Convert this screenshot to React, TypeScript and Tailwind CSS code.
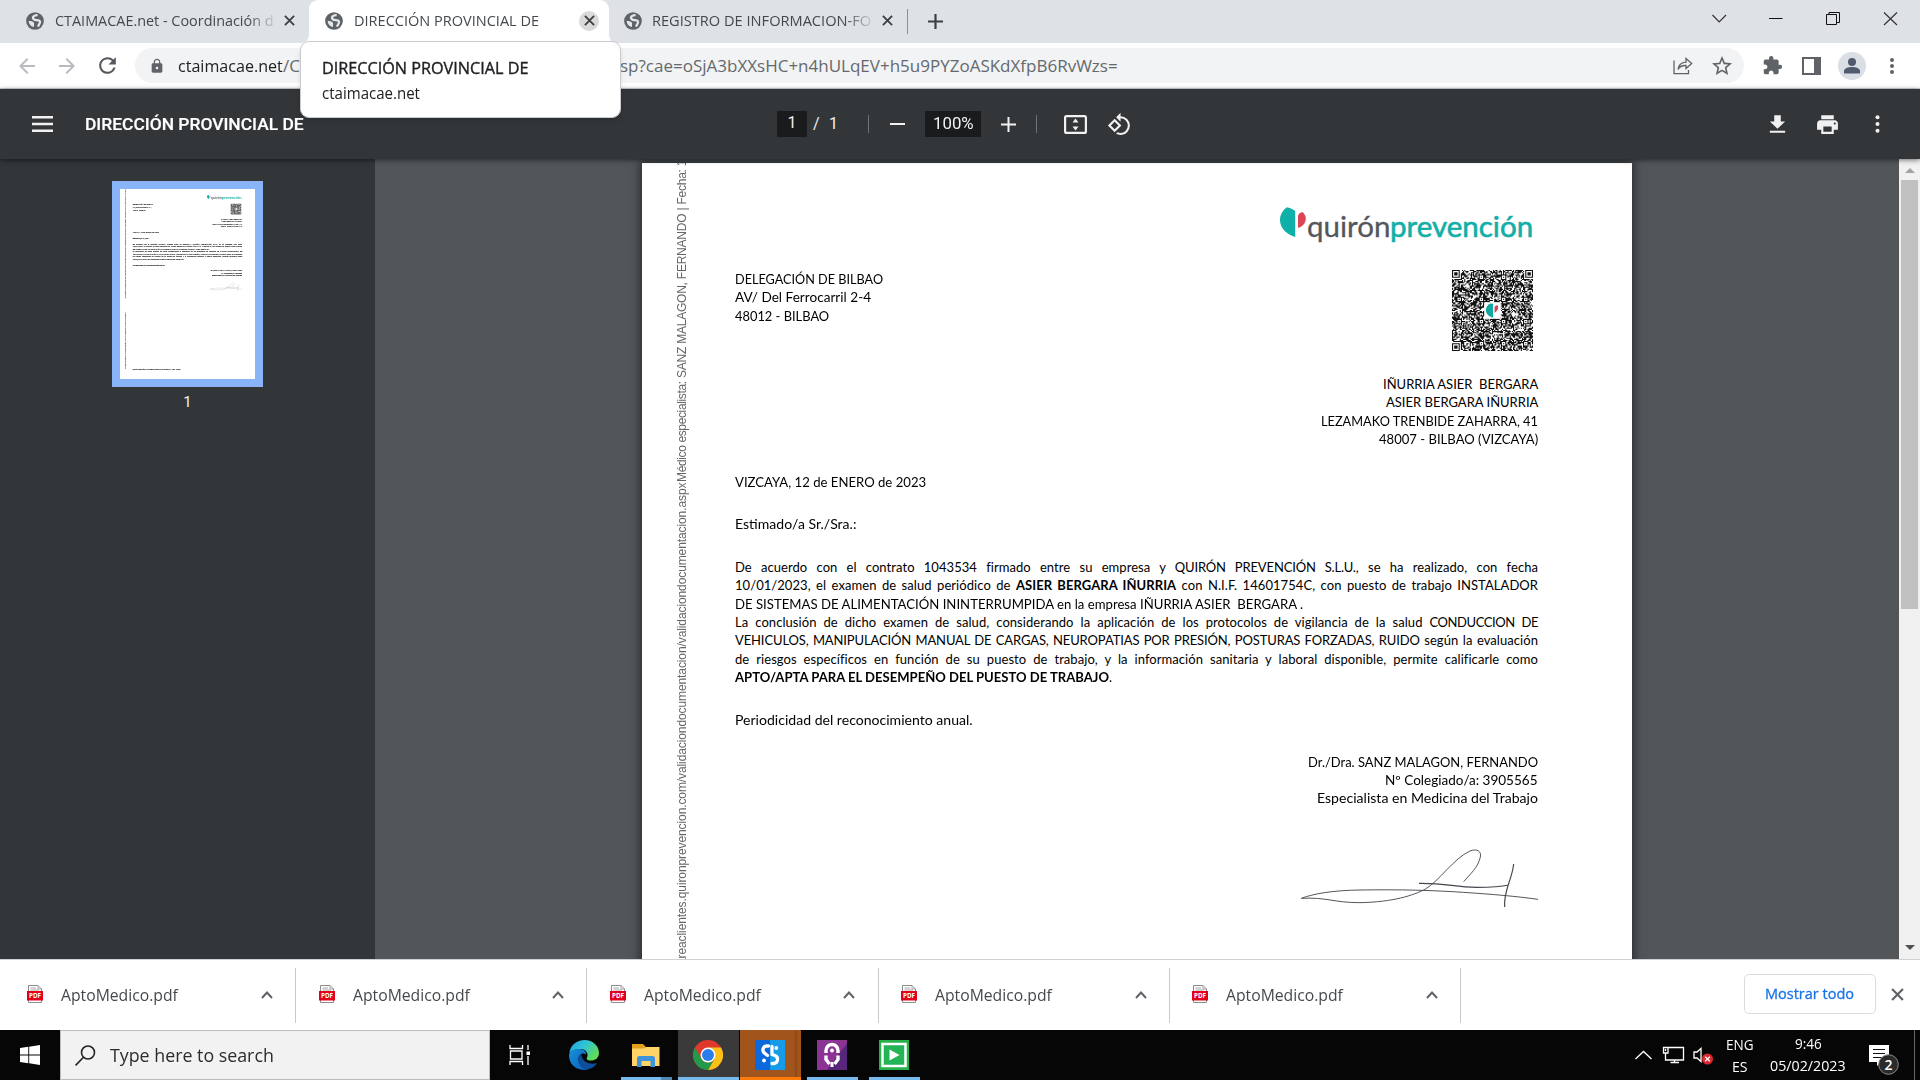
import { useLayoutEffect, useRef, useState } from "react";
import type { ReactNode } from "react";
import { MdStarOutline, MdExtension, MdLock, MdRefresh, MdPrint, MdFileDownload, MdArrowBack, MdArrowForward } from "react-icons/md";

/** Text stretched or condensed horizontally to the width of its box. */
function Fit({ children, className = "" }: { children: ReactNode; className?: string }) {
  const box = useRef<HTMLSpanElement>(null);
  const inner = useRef<HTMLSpanElement>(null);
  const [scale, setScale] = useState(1);
  useLayoutEffect(() => {
    if (box.current && inner.current && inner.current.offsetWidth > 0) {
      setScale(box.current.clientWidth / inner.current.offsetWidth);
    }
  }, []);
  return (
    <span ref={box} className={"block shrink-0 whitespace-pre " + className}>
      <span ref={inner} className="inline-block origin-left" style={{ transform: `scaleX(${scale})` }}>
        {children}
      </span>
    </span>
  );
}

function Globe() {
  return (
    <svg viewBox="0 0 24 24" className="h-[18px] w-[18px] shrink-0">
      <circle cx="12" cy="12" r="11.8" fill="#5f6368" />
      <path d="M15.5 4.2C10 4 7.800 7.500 10.500 9.800C12.500 11.600 17.500 9.800 18.700 12.500C19.500 15 16.800 16.500 16 19.500" fill="none" stroke="#e4e7ea" strokeWidth="3" />
      <path d="M3.500 11.500C6.500 12 11.500 12.500 10.800 16L10.600 20C6 19 3.500 15.500 3.500 11.500Z" fill="#e4e7ea" />
    </svg>
  );
}

function Cross({ className }: { className: string }) {
  return (
    <svg viewBox="0 0 12 12" className={"shrink-0 " + className}>
      <path d="M1 1L11 11M11 1L1 11" stroke="currentColor" strokeWidth="2" fill="none" />
    </svg>
  );
}

function TabStrip() {
  return (
    <div className="flex h-[43px] shrink-0 bg-[#dee1e6] text-[15px] leading-[20px] text-[#45494d]">
      <div className="flex h-[41px] w-[309px] shrink-0 items-center pl-[26px]">
        <Globe />
        <div className="mb-px ml-[11px] w-[219px] overflow-hidden [mask-image:linear-gradient(to_right,black_88%,transparent_102%)]">
          <Fit className="w-[219px]">CTAIMACAE.net - Coordinación d</Fit>
        </div>
        <Cross className="ml-[10px] h-[11px] w-[11px] text-[#3c4043]" />
      </div>
      <div className="relative flex h-[43px] w-[300px] shrink-0 items-center rounded-t-[9px] bg-white pb-[2px] pl-[16px]">
        <svg viewBox="0 0 9 9" className="absolute -left-[9px] bottom-0 h-[9px] w-[9px]"><path d="M9 0V9H0Q9 9 9 0Z" fill="#fff" /></svg>
        <svg viewBox="0 0 9 9" className="absolute -right-[9px] bottom-0 h-[9px] w-[9px]"><path d="M0 0V9H9Q0 9 0 0Z" fill="#fff" /></svg>
        <Globe />
        <Fit className="mb-px ml-[11px] w-[185px]">DIRECCIÓN PROVINCIAL DE</Fit>
        <div className="ml-[40px] flex h-[20px] w-[20px] items-center justify-center rounded-full bg-[#dadada]">
          <Cross className="h-[11px] w-[11px] text-[#3c4043]" />
        </div>
      </div>
      <div className="flex h-[41px] w-[298px] shrink-0 items-center pl-[15px]">
        <Globe />
        <div className="mb-px ml-[10px] w-[219px] overflow-hidden [mask-image:linear-gradient(to_right,black_88%,transparent_102%)]">
          <Fit className="w-[219px]">REGISTRO DE INFORMACION-FO</Fit>
        </div>
        <Cross className="ml-[11px] h-[11px] w-[11px] text-[#3c4043]" />
      </div>
      <div className="mt-[9px] h-[25px] w-px bg-[#8b8e92]" />
      <svg viewBox="0 0 15 15" className="ml-[20px] mt-[14px] h-[15px] w-[15px]"><path d="M7.500 0V15M0 7.500H15" stroke="#3c4043" strokeWidth="2.200" /></svg>
      <svg viewBox="0 0 186 14" className="ml-auto mr-[22px] mt-[12px] h-[14px] w-[186px]" fill="none" stroke="#111">
        <path d="M.5 3L7.200 9.800L14 3" stroke="#333" strokeWidth="1.200" />
        <path d="M57 6.500H70.500" />
        <path d="M114.500 2.500H124.500V12.500H114.500ZM117 2.500V.5H127.500V10.500H125" />
        <path d="M172 .5L185 13M185 .5L172 13" stroke="#333" strokeWidth="1.200" />
      </svg>
    </div>
  );
}

function AddressBar() {
  return (
    <div className="flex h-[46px] shrink-0 items-center border-b border-[#d5d7da] bg-white">
      <MdArrowBack className="ml-[15px] h-[24px] w-[24px] text-[#b9bbbe]" />
      <MdArrowForward className="ml-[16px] h-[24px] w-[24px] text-[#b9bbbe]" />
      <MdRefresh className="ml-[16px] h-[25px] w-[25px] text-[#55595d]" />
      <div className="ml-[15px] flex h-[35px] w-[1609px] shrink-0 items-center rounded-full bg-[#f1f3f4] pl-[14px]">
        <MdLock className="h-[16px] w-[16px] text-[#5f6368]" />
        <div className="ml-[13px] flex text-[17px] leading-[22px] text-[#65696d]">
          <Fit className="w-[105px] text-[#202124]">ctaimacae.net</Fit>
          <span className="w-[337px]">/C</span>
          <Fit className="w-[498px]">sp?cae=oSjA3bXXsHC+n4hULqEV+h5u9PYZoASKdXfpB6RvWzs=</Fit>
        </div>
        <svg viewBox="0 0 20 18" className="ml-auto h-[18px] w-[20px] shrink-0" fill="none" stroke="#5f6368" strokeWidth="1.300">
          <path d="M1 3.500V16.700H15.500V13M5 12.500C5.500 8 8 5.500 13 5.200V1.500L18.700 6.500L13 11.500V8.500C9 8.300 6.500 9.500 5 12.500Z" />
        </svg>
        <MdStarOutline className="ml-[17px] mr-[10px] h-[24px] w-[24px] text-[#5f6368]" />
      </div>
      <MdExtension className="ml-[18px] h-[21px] w-[21px] text-[#5f6368]" />
      <svg viewBox="0 0 19 18" className="ml-[19px] h-[18px] w-[19px]"><path d="M1 1H18V17H1Z" fill="none" stroke="#5f6368" strokeWidth="2" /><path d="M12 1H18V17H12Z" fill="#5f6368" /></svg>
      <svg viewBox="0 0 28 28" className="ml-[17px] h-[28px] w-[28px]">
        <circle cx="14" cy="14" r="14" fill="#dadfe6" />
        <circle cx="14" cy="10" r="4" fill="#505b70" />
        <path d="M6 21.500V19C6 16.500 10 15 14 15S22 16.500 22 19V21.500Z" fill="#505b70" />
      </svg>
      <svg viewBox="0 0 4 18" className="ml-[24px] h-[18px] w-[4px]" fill="#5f6368"><circle cx="2" cy="3" r="2" /><circle cx="2" cy="9" r="2" /><circle cx="2" cy="15" r="2" /></svg>
    </div>
  );
}

function HoverCard() {
  return (
    <div className="absolute left-[300px] top-[41px] z-20 h-[77px] w-[321px] rounded-[9px] border border-[#c9cbce] bg-white pl-[21px] pt-[14px] text-[15.500px] leading-[25px] text-[#202124] shadow-md">
      <Fit className="w-[206px] [-webkit-text-stroke:.35px_#202124]">DIRECCIÓN PROVINCIAL DE</Fit>
      <Fit className="w-[98px]">ctaimacae.net</Fit>
    </div>
  );
}

function PdfToolbar() {
  return (
    <div className="relative z-10 flex h-[70px] shrink-0 items-center bg-[#323639] font-['Roboto'] text-[16px] leading-[20px] text-[#f1f1f1] shadow-[0_1px_5px_rgba(0,0,0,.55)]">
      <svg viewBox="0 0 21 16" className="ml-[32px] h-[16px] w-[21px]" fill="#f1f1f1"><path d="M0 0H21V2.500H0ZM0 6.700H21V9.200H0ZM0 13.500H21V16H0Z" /></svg>
      <Fit className="ml-[32px] w-[219px] text-[17px] font-medium text-white [-webkit-text-stroke:.2px_#fff]">DIRECCIÓN PROVINCIAL DE</Fit>
      <div className="ml-[473px] h-[26px] w-[30px] bg-[#191b1c] pt-[2px] text-center">1</div>
      <div className="ml-[6px] w-[6px]">/</div>
      <div className="ml-[10px] w-[10px]">1</div>
      <div className="ml-[29px] h-[18px] w-px bg-[#717476]" />
      <div className="ml-[21px] h-[2px] w-[15px] bg-[#f1f1f1]" />
      <div className="ml-[20px] flex h-[26px] w-[56px] items-center justify-center bg-[#191b1c]"><Fit className="w-[41px]">100%</Fit></div>
      <svg viewBox="0 0 15 15" className="ml-[20px] h-[15px] w-[15px]"><path d="M7.500 0V15M0 7.500H15" stroke="#f1f1f1" strokeWidth="2" /></svg>
      <div className="ml-[20px] h-[18px] w-px bg-[#717476]" />
      <svg viewBox="0 0 23 19" className="ml-[27px] h-[19px] w-[23px]">
        <rect x="1.100" y="1.100" width="20.800" height="16.800" rx="1.500" fill="none" stroke="#f1f1f1" strokeWidth="2.200" />
        <path d="M11.500 3.500L14.500 7.500H8.500ZM11.500 15.500L14.500 11.500H8.500Z" fill="#f1f1f1" />
      </svg>
      <svg viewBox="0 0 24 24" className="ml-[20px] h-[25px] w-[25px]">
        <path fill="#f1f1f1" d="M7.340 6.410L.860 12.900l6.490 6.480 6.490-6.480-6.500-6.490zM3.690 12.900l3.660-3.660L11 12.900l-3.660 3.660-3.650-3.660zm15.670-6.260A8.950 8.950 0 0 0 13 4V.760L8.760 5 13 9.240V6c1.790 0 3.580.680 4.950 2.050a7.007 7.007 0 0 1 0 9.900 6.973 6.973 0 0 1-7.790 1.440l-1.490 1.490C10.020 21.620 11.510 22 13 22c2.300 0 4.610-.880 6.360-2.640a8.980 8.980 0 0 0 0-12.720z" />
      </svg>
      <MdFileDownload className="ml-auto h-[25px] w-[25px] scale-x-105" />
      <MdPrint className="ml-[25px] h-[25px] w-[25px]" />
      <svg viewBox="0 0 4 18" className="ml-[35px] mr-[40px] h-[18px] w-[5px]" fill="#f1f1f1"><circle cx="2" cy="2.300" r="2" /><circle cx="2" cy="9" r="2" /><circle cx="2" cy="15.700" r="2" /></svg>
    </div>
  );
}

const QR_SIZE = 73;

/** Module pattern of the QR code: three finders, a grid of alignment marks and a pseudo-random payload. */
function qrPath(): string {
  const centres = [6, 26, 46, 66];
  let seed = 20230112;
  let d = "";
  const ring = (dx: number, dy: number) => Math.max(Math.abs(dx), Math.abs(dy));
  for (let y = 0; y < QR_SIZE; y++) {
    for (let x = 0; x < QR_SIZE; x++) {
      seed = (seed * 1103515245 + 12345) % 2147483648;
      let on = (seed >> 16) % 100 < 58;
      const fx = x < 8 ? 3 : x > QR_SIZE - 9 ? QR_SIZE - 4 : -1;
      const fy = y < 8 ? 3 : y > QR_SIZE - 9 ? QR_SIZE - 4 : -1;
      if (fx >= 0 && fy >= 0 && !(fx > 3 && fy > 3)) {
        const r = ring(x - fx, y - fy);
        on = r === 3 || r <= 1;
      } else {
        for (const cy of centres) for (const cx of centres) {
          const r = ring(x - cx, y - cy);
          if (r <= 2) on = r !== 1;
        }
      }
      if (on) d += `M${x} ${y}h1v1h-1z`;
    }
  }
  return d;
}
const QR_PATH = qrPath();

function QrCode() {
  return (
    <svg viewBox="0 0 73 73" className="h-[81px] w-[81px]">
      <path d={QR_PATH} fill="#111" />
      <rect x="29" y="29" width="15" height="15" fill="#fff" />
      <path d="M37 30.500V43C33 42 30.500 39 30.500 36C30.500 33.500 32.500 31 34.500 30.200Z" fill="#12a8a0" />
      <path d="M38.300 38.500V34C38.300 32.500 40 31.500 41 31.800C42.500 34 41 37 38.300 38.500Z" fill="#d9445b" />
    </svg>
  );
}

function Logo() {
  return (
    <div className="flex h-[38px] w-[253px] text-[29.500px] leading-[38px]">
      <svg viewBox="0 0 27 31" className="h-[31px] w-[27px]">
        <path d="M15.200 4V30C8 28 0 22 0 13C0 7 3.500 2.500 7 .3C11 1.200 13.500 3 15.200 4Z" fill="#0fb0a7" />
        <path d="M18 21V9C18.500 6.500 21 4.800 23 5.200C25.500 8 26.500 11 25.500 14C24.500 17.500 21.500 20 18 21Z" fill="#dc4558" />
      </svg>
      <Fit className="h-[38px] w-[83px] text-[#54565b] [-webkit-text-stroke:.3px_#54565b]">quirón</Fit>
      <Fit className="h-[38px] w-[143px] text-[#13afa7] [-webkit-text-stroke:.6px_#13afa7]">prevención</Fit>
    </div>
  );
}

function Justified({ children }: { children: ReactNode }) {
  return <div className="w-[803px] whitespace-nowrap tracking-[.06px] [text-align-last:justify]">{children}</div>;
}

function Letter() {
  return (
    <div className="relative flex h-[1394px] w-[990px] flex-col overflow-hidden bg-white pl-[93px] pr-[94px] pt-[44px] font-['Lato'] text-[13px] leading-[18.330px] text-black">
      <div className="absolute left-[33px] top-0 flex h-[1320px] rotate-180 whitespace-pre font-['Liberation_Sans'] text-[12px] leading-[14px] text-[#666] [writing-mode:vertical-rl]">
        <span className="h-[518px] shrink-0">Documento firmado electrónicamente. Puede comprobar su validez en https://</span>
        <span className="h-[483px] shrink-0 tracking-[-.1px]">areaclientes.quironprevencion.com/validaciondocumentacion/validaciondocumentacion.aspx</span>
        <span className="h-[104px] shrink-0 tracking-[-.37px]">Médico especialista: </span>
        <span className="shrink-0 tracking-[-.23px]">SANZ MALAGON, FERNANDO | Fecha: 1</span>
      </div>
      <div className="mr-[5px] self-end"><Logo /></div>
      <div className="mt-[25px] flex h-[81px] justify-between pr-[5px]">
        <div>
          <Fit className="w-[148px]">DELEGACIÓN DE BILBAO</Fit>
          <Fit className="w-[136px]">AV/ Del Ferrocarril 2-4</Fit>
          <Fit className="w-[94px]">48012 - BILBAO</Fit>
        </div>
        <QrCode />
      </div>
      <div className="mt-[24px] flex flex-col items-end">
        <Fit className="w-[155px]">{"IÑURRIA ASIER  BERGARA"}</Fit>
        <Fit className="w-[152px]">ASIER BERGARA IÑURRIA</Fit>
        <Fit className="w-[217px]">LEZAMAKO TRENBIDE ZAHARRA, 41</Fit>
        <Fit className="w-[159px]">48007 - BILBAO (VIZCAYA)</Fit>
      </div>
      <Fit className="mt-[25px] w-[191px]">VIZCAYA, 12 de ENERO de 2023</Fit>
      <Fit className="mt-[23px] w-[121px]">Estimado/a Sr./Sra.:</Fit>
      <div className="mt-[25px]">
        <Justified>De acuerdo con el contrato 1043534 firmado entre su empresa y <span className="tracking-[-.15px]">QUIRÓN PREVENCIÓN S.L.U.</span>, se ha realizado, con fecha</Justified>
        <Justified>10/01/2023, el examen de salud periódico de <b>ASIER BERGARA IÑURRIA</b> con N.I.F. 14601754C, con puesto de trabajo INSTALADOR</Justified>
        <Fit className="w-[568px]">{"DE SISTEMAS DE ALIMENTACIÓN ININTERRUMPIDA en la empresa IÑURRIA ASIER  BERGARA ."}</Fit>
        <Justified>La conclusión de dicho examen de salud, considerando la aplicación de los protocolos de vigilancia de la salud <span className="tracking-[-.4px]">CONDUCCION DE</span></Justified>
        <Justified><span className="tracking-[-.12px]">VEHICULOS, MANIPULACIÓN MANUAL DE CARGAS, NEUROPATIAS POR PRESIÓN, POSTURAS FORZADAS, RUIDO</span> según la evaluación</Justified>
        <Justified>de riesgos específicos en función de su puesto de trabajo, y la información sanitaria y laboral disponible, permite calificarle como</Justified>
        <Fit className="w-[377px]"><b>APTO/APTA PARA EL DESEMPEÑO DEL PUESTO DE TRABAJO</b>.</Fit>
      </div>
      <Fit className="mt-[25px] w-[238px]">Periodicidad del reconocimiento anual.</Fit>
      <div className="mt-[23px] flex flex-col items-end">
        <Fit className="w-[230px]">Dr./Dra. SANZ MALAGON, FERNANDO</Fit>
        <Fit className="w-[153px]">Nº Colegiado/a: 3905565</Fit>
        <Fit className="w-[221px]">Especialista en Medicina del Trabajo</Fit>
      </div>
      <svg viewBox="600 920 720 192" className="mr-[-2px] mt-[39px] h-[64px] w-[240px] shrink-0 self-end" fill="none" stroke="#55555c" strokeWidth="3">
        <path d="M604 1074C640 1060 700 1050 780 1049C900 1047 1000 1050 1090 1056C1180 1062 1250 1068 1314 1077M604 1074C680 1070 700 1087 780 1087C880 1085 940 1065 975 1047C1020 1020 1060 955 1110 932C1130 924 1145 932 1141 950C1135 980 1110 1002 1091 1024" />
        <path d="M957 1029C1040 1028 1060 1040 1130 1041C1170 1041 1200 1040 1226 1034M1241 971C1236 1020 1210 1050 1214 1100" stroke="#44444c" strokeWidth="3.500" />
      </svg>
      <div className="mt-auto pb-[62px] text-[10px] leading-[16px]"><Fit className="w-[350px]">QUIRÓN PREVENCIÓN S.L.U. Delegación de Bilbao, Av. Del Ferrocarril 2-4, 48012 - BILBAO</Fit></div>
    </div>
  );
}

function PdfViewer() {
  return (
    <div className="flex min-h-0 flex-1 bg-[#525659]">
      <div className="flex w-[375px] shrink-0 flex-col items-center bg-[#323639] pt-[22px]">
        <div className="h-[206px] w-[151px] border-8 border-[#8ab4f8]">
          <div className="h-[190px] w-[135px] overflow-hidden bg-white">
            <div className="w-[990px] origin-top-left scale-[.13636] [-webkit-text-stroke:.5px]"><Letter /></div>
          </div>
        </div>
        <span className="mt-[5px] font-['Roboto'] text-[15px] leading-[20px] text-[#f1f1f1]">1</span>
      </div>
      <div className="min-w-0 flex-1 overflow-hidden pl-[267px] pt-[4px]">
        <div className="h-[1394px] w-[990px] shadow-[0_0_9px_2px_rgba(0,0,0,.5)]"><Letter /></div>
      </div>
      <div className="flex w-[21px] shrink-0 flex-col items-center bg-[#f1f1f1] pb-[9px] pt-[9px]">
        <svg viewBox="0 0 10 5" className="h-[5px] w-[10px] shrink-0"><path d="M0 5L5 0L10 5Z" fill="#a3a3a3" /></svg>
        <div className="mt-[7px] h-[429px] w-[17px] bg-[#c1c1c1]" />
        <svg viewBox="0 0 10 5" className="mt-auto h-[5px] w-[10px] shrink-0"><path d="M0 0L5 5L10 0Z" fill="#505050" /></svg>
      </div>
    </div>
  );
}

function PdfFileIcon() {
  return (
    <svg viewBox="0 0 16 18" className="h-[18px] w-[16px] shrink-0">
      <path d="M1.500 .5H11L14.500 4V17.500H1.500Z" fill="#fff" stroke="#8c8c8c" />
      <path d="M11 .5V4H14.500M3.500 3H9M3.500 5H12" fill="none" stroke="#a5a5a5" />
      <rect y="6" width="16" height="9.500" fill="#e2001a" />
      <text x="8" y="13.300" textAnchor="middle" fontSize="7" fontWeight="700" textLength="12" lengthAdjust="spacingAndGlyphs" fill="#fff">PDF</text>
    </svg>
  );
}

function DownloadShelf() {
  return (
    <div className="flex h-[71px] shrink-0 items-start border-t border-[#cfd1d3] bg-white pt-[8px]">
      {["a", "b", "c", "d", "e"].map((id) => (
        <div key={id} className="flex h-[55px] w-[291.250px] shrink-0 items-center border-r border-[#c8c9cb] pl-[22.500px] text-[16px] leading-[22px] text-[#45494d] first:w-[296px] first:pl-[27px]">
          <div className="pb-[3px]"><PdfFileIcon /></div>
          <Fit className="mb-px ml-[18px] w-[117px]">AptoMedico.pdf</Fit>
          <svg viewBox="0 0 12 8" className="mb-px ml-[82.500px] h-[8px] w-[12px]"><path d="M1 7L6 1.500L11 7" fill="none" stroke="#5f6368" strokeWidth="2" /></svg>
        </div>
      ))}
      <div className="ml-auto mt-[6px] flex h-[40px] w-[132px] items-center justify-center rounded-[5px] border border-[#dadce0] pb-[2px] pr-[2px] text-[15px] leading-[20px] text-[#1a73e8] [-webkit-text-stroke:.3px_#1a73e8]">
        <Fit className="w-[89px]">Mostrar todo</Fit>
      </div>
      <Cross className="ml-[15px] mr-[16px] mt-[20px] h-[13px] w-[13px] text-[#5f6368]" />
    </div>
  );
}

function EdgeIcon() {
  return (
    <svg viewBox="0 0 30 30" className="h-[30px] w-[30px]">
      <defs>
        <linearGradient id="edgeTop" x1="0" y1="0" x2="1" y2=".6"><stop offset="0" stopColor="#1f9fe0" /><stop offset=".5" stopColor="#30c4d4" /><stop offset="1" stopColor="#63dd52" /></linearGradient>
        <linearGradient id="edgeLow" x1="0" y1="0" x2="1" y2="1"><stop offset="0" stopColor="#1694dd" /><stop offset="1" stopColor="#0a5cb4" /></linearGradient>
      </defs>
      <path d="M.3 13C1.500 5 8 0 15.500 0C24 0 30 6 30 13C30 18 26 20.500 22 20.500C18 20.500 17 19 18 17.500C20 14 17 9 11.500 9C6 9 2 11 .3 13Z" fill="url(#edgeTop)" />
      <path d="M.2 14C1.500 10.500 6 8.800 10.500 9C15 9.200 17.500 12 17 14.500C13 12 9 15 9.500 20C10 25 14 29 19 29.400C8 32 -1 24.500 .2 14Z" fill="url(#edgeLow)" />
      <path d="M12 13.700C7 17 9 27.500 18 29.600C22 29 26 26.500 28 23C22.500 25 13 23 12 13.700Z" fill="#0d4f9c" />
    </svg>
  );
}

function FolderIcon() {
  return (
    <svg viewBox="0 0 28 23" className="h-[23px] w-[28px]">
      <path d="M0 0H11L14 3H27V8H0Z" fill="#e0a01c" />
      <path d="M0 4.500H12L14.500 3H27.500V22H0Z" fill="#ffd367" />
      <path d="M5 23V14.500Q5 12 7.500 12H20.500Q23 12 23 14.500V23H18.500V17H9.500V23Z" fill="#3f93d8" />
    </svg>
  );
}

function ChromeIcon() {
  return (
    <svg viewBox="0 0 30 30" className="h-[30px] w-[30px]">
      <circle cx="15" cy="15" r="15" fill="#e0382c" />
      <path d="M15 7.500H28A15 15 0 0 1 15 30L21.500 18.700Z" fill="#fbc116" />
      <path d="M2 7.500L8.500 18.700Q11 22.500 15 22.500Q19 22.500 21.500 18.700L15 30A15 15 0 0 1 2 7.500Z" fill="#229a4a" />
      <circle cx="15" cy="15" r="7.500" fill="#fff" />
      <circle cx="15" cy="15" r="6" fill="#2b7de9" />
    </svg>
  );
}

function TaskbarApp({ children, box, line }: { children: ReactNode; box: string; line: string }) {
  return (
    <div className={"flex h-full shrink-0 flex-col items-center justify-between pt-[10px] " + box}>
      <div className="flex h-[30px] items-center pr-px">{children}</div>
      <div className={"h-[3px] " + line} />
    </div>
  );
}

function Taskbar() {
  return (
    <div className="flex h-[50px] shrink-0 bg-[#060606] text-white">
      <div className="flex w-[60px] items-center justify-center">
        <svg viewBox="0 0 20 20" className="h-[20px] w-[20px]" fill="#fff"><path d="M0 3L8.300 1.800V9.500H0ZM9.200 1.700L20 0V9.500H9.200ZM0 10.500H8.300V18.200L0 17ZM9.200 10.500H20V20L9.200 18.300Z" /></svg>
      </div>
      <div className="flex w-[430px] shrink-0 items-center border border-[#bdbdbd] bg-[#f2f2f2] pl-[14px] text-[19px] leading-[26px] text-[#2c2c2c]">
        <svg viewBox="0 0 21 21" className="h-[21px] w-[21px]" fill="none" stroke="#222" strokeWidth="1.600"><circle cx="13" cy="7.500" r="6.500" /><path d="M8.500 12.300L.6 20.400" /></svg>
        <Fit className="ml-[14px] w-[164px]">Type here to search</Fit>
      </div>
      <div className="flex w-[60px] items-center justify-center">
        <svg viewBox="0 0 22 20" className="h-[20px] w-[22px]" fill="none" stroke="#fff" strokeWidth="1.300"><path d="M1 0V3.500H13.500V0M1 20V16.500H13.500V20M1.500 6H13V14H1.500ZM19 0V5M19 11V20" /><path d="M17.500 6.500H21V10H17.500Z" fill="#fff" stroke="none" /></svg>
      </div>
      <div className="flex w-[67px] items-center justify-center"><EdgeIcon /></div>
      <TaskbarApp box="ml-[4px] w-[51px]" line="w-[51px] bg-[linear-gradient(to_right,#76b9ed_40px,#5288b5_40px)]"><FolderIcon /></TaskbarApp>
      <TaskbarApp box="ml-[6px] w-[61px] bg-[#3a3a3a]" line="w-[61px] bg-[#76b9ed]"><ChromeIcon /></TaskbarApp>
      <TaskbarApp box="ml-px w-[61px] bg-[linear-gradient(to_right,#a1551d_55px,#8a4616_55px,#a1551d_58px)]" line="w-[61px] bg-[#ff7a08]">
        <svg viewBox="0 0 30 30" className="h-[30px] w-[30px]">
          <rect width="30" height="30" fill="#0b69dc" /><path d="M15 0H30V30H15Z" fill="#169be8" />
          <path d="M13.500 6H11.500A4 4 0 0 0 10 13.500L12.500 15.500M17 6.500V14.500L20 15.500A4.200 4.200 0 0 1 19 23.500H17" fill="none" stroke="#fff" strokeWidth="3.300" strokeLinecap="round" strokeLinejoin="round" />
          <circle cx="21.300" cy="8" r="1.900" fill="#fff" /><circle cx="9" cy="20.500" r="1.900" fill="#fff" />
        </svg>
      </TaskbarApp>
      <TaskbarApp box="ml-[6px] w-[51px]" line="w-[51px] bg-[#76b9ed]">
        <svg viewBox="0 0 30 30" className="h-[30px] w-[30px]">
          <rect width="30" height="30" fill="#8c3494" /><path d="M30 3V30H10Z" fill="#57277c" />
          <path d="M9 13V10.500A6 6 0 0 1 21 10.500V13M9 15.500V19.500L12.500 24M21 15.500V19.500L17.500 24" fill="none" stroke="#fff" strokeWidth="3.400" />
          <circle cx="15" cy="10.500" r="2" fill="#fff" /><path d="M13.500 22H16.500V27H13.500Z" fill="#fff" />
        </svg>
      </TaskbarApp>
      <TaskbarApp box="ml-[11px] w-[51px]" line="w-[51px] bg-[#76b9ed]">
        <svg viewBox="0 0 30 30" className="h-[30px] w-[30px]">
          <rect width="30" height="30" fill="#27b14b" /><rect x="3.500" y="4" width="23" height="22" fill="#24b357" stroke="#fff" strokeWidth="2.500" /><path d="M10.500 9.500L20.500 15L10.500 20.500Z" fill="#fff" />
        </svg>
      </TaskbarApp>
      <svg viewBox="0 0 80 20" className="ml-auto mt-[15px] h-[20px] w-[80px] shrink-0" fill="none" stroke="#fff" strokeWidth="1.300">
        <path d="M1.500 14L9.500 6.500L17.500 14" />
        <path d="M34 2.500H49.500V15H31.500V8M36.500 17.500H45M40.500 15V17.500M29.500 2.500H34V8H29.500ZM31.500 4V6" />
        <path d="M60 7H63L67 3.500V16.500L63 13H60Z" />
        <circle cx="73.500" cy="14" r="5.500" fill="#e0262d" stroke="none" /><path d="M71.200 11.700L75.800 16.300M75.800 11.700L71.200 16.300" />
      </svg>
      <div className="ml-[12px] flex w-[28px] flex-col items-center text-[15px] leading-[22px]">
        <Fit className="mt-[3px] w-[28px]">ENG</Fit>
        <Fit className="w-[16px]">ES</Fit>
      </div>
      <div className="ml-[16px] flex w-[76px] flex-col items-center text-[15px] leading-[22px]">
        <Fit className="mt-[2px] w-[27px]">9:46</Fit>
        <Fit className="w-[76px]">05/02/2023</Fit>
      </div>
      <svg viewBox="0 0 32 32" className="ml-[22px] mt-[14px] h-[32px] w-[32px]">
        <path d="M1 1H21V18H13L9 22V18H1Z" fill="#fff" /><path d="M5 5.500H17M5 9.500H17M5 13.500H14" stroke="#111" strokeWidth="1.200" />
        <circle cx="20.500" cy="20.500" r="9.800" fill="#2b2b2b" stroke="#8a8a8a" />
        <text x="20.500" y="25.500" textAnchor="middle" fontSize="14" fontWeight="600" fill="#fff">2</text>
      </svg>
      <div className="ml-[14px] mr-[5px] w-px bg-[#666]" />
    </div>
  );
}

export default function App() {
  return (
    <div className="relative flex h-[1080px] w-[1920px] flex-col overflow-hidden bg-white font-['Open_Sans','Noto_Sans',sans-serif]">
      <TabStrip />
      <AddressBar />
      <HoverCard />
      <PdfToolbar />
      <PdfViewer />
      <DownloadShelf />
      <Taskbar />
    </div>
  );
}
